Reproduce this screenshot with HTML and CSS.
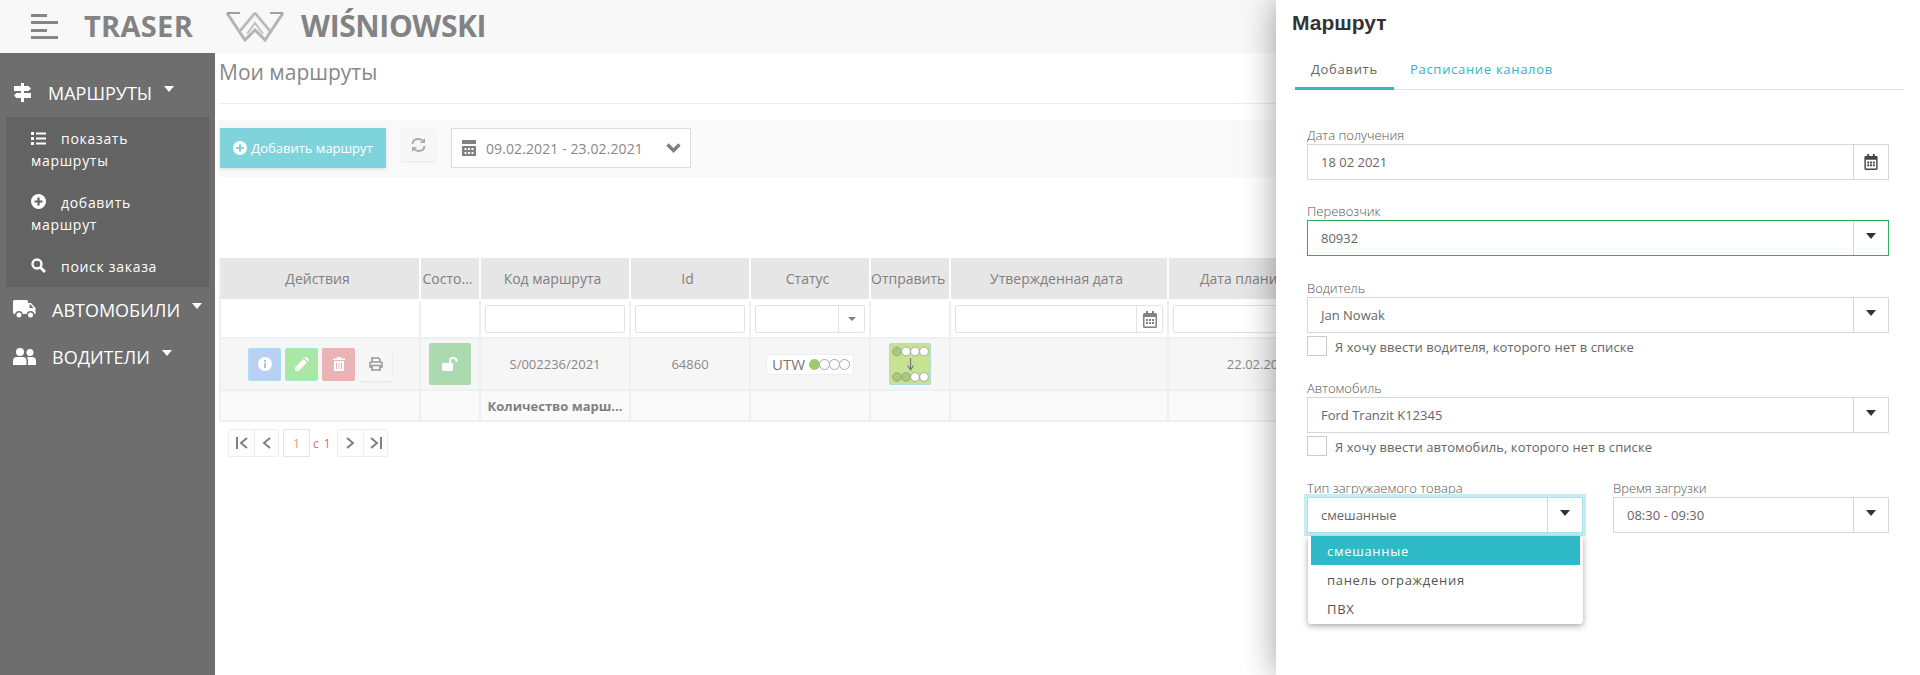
FILE: index.html
```html
<!DOCTYPE html>
<html lang="ru">
<head>
<meta charset="utf-8">
<title>Мои маршруты</title>
<link rel="stylesheet" href="styles.css">
</head>
<body>
<header class="topbar">
  <svg class="burger" width="27" height="26" viewBox="0 0 27 26"><rect width="16" height="3" fill="#858585"/><rect y="7" width="27" height="3" fill="#858585"/><rect y="15" width="16" height="3" fill="#858585"/><rect y="22" width="27" height="3" fill="#858585"/></svg>
  <span class="brand">TRASER</span>
  <svg class="w-logo" width="58" height="30" viewBox="0 0 58 30" fill="none"><path d="M1 1 19 28 29 18 39 28 57 1" stroke="#b4b4b4" stroke-width="3"/><path d="M1 1H14M57 1H44" stroke="#a0a0a0" stroke-width="2"/><path d="M14 19 29 1 44 19" stroke="#d0d0d0" stroke-width="3.400"/><path d="M14 19 29 1 44 19" stroke="#9c9c9c" stroke-width="1"/><path d="M21 22 29 11 37 22" stroke="#c2c2c2" stroke-width="2"/></svg>
  <span class="brand brand-second">WIŚNIOWSKI</span>
</header>
<div class="layout">
  <nav class="sidebar">
    <div class="nav-head">
      <svg class="nav-icon" width="19" height="19" viewBox="0 0 19 19" fill="#fff"><rect x="8" y="0" width="3" height="19"/><path d="M1 3H15.500L18 5.500 15.500 8H1Z"/><path d="M3.500 10H18V15H3.500L1 12.500Z"/></svg>
      <span>Маршруты</span><i class="nav-caret"></i>
    </div>
    <div class="submenu">
      <a class="sub-item"><svg class="sub-icon" width="15" height="13" viewBox="0 0 15 13" fill="#fff"><rect width="3" height="3"/><rect y="5" width="3" height="3"/><rect y="10" width="3" height="3"/><rect x="5" y="0.500" width="10" height="2"/><rect x="5" y="5.500" width="10" height="2"/><rect x="5" y="10.500" width="10" height="2"/></svg>показать маршруты</a>
      <a class="sub-item"><svg class="sub-icon" width="15" height="15" viewBox="0 0 15 15"><circle cx="7.500" cy="7.500" r="7.500" fill="#fff"/><path d="M7.500 3.500V11.500M3.500 7.500H11.500" stroke="#636363" stroke-width="2.200"/></svg>добавить маршрут</a>
      <a class="sub-item"><svg class="sub-icon" width="15" height="15" viewBox="0 0 15 15" fill="none" stroke="#fff"><circle cx="6" cy="6" r="4.500" stroke-width="2.400"/><path d="M9.500 9.500 14 14" stroke-width="2.800"/></svg>поиск заказа</a>
    </div>
    <div class="nav-head">
      <svg class="nav-icon" width="23" height="19" viewBox="0 0 23 19" fill="#fff"><path d="M1.500 0H13.500Q15 0 15 1.500V3H18L22.500 8V14H1.500Q0 14 0 12.500V1.500Q0 0 1.500 0Z"/><circle cx="6" cy="15" r="3.200" stroke="#6e6e6e" stroke-width="1.400"/><circle cx="17.500" cy="15" r="3.200" stroke="#6e6e6e" stroke-width="1.400"/><path d="M16.500 4.500V8H20.500L17.500 4.500Z" fill="#6e6e6e"/></svg>
      <span>Автомобили</span><i class="nav-caret"></i>
    </div>
    <div class="nav-head">
      <svg class="nav-icon" width="23" height="17" viewBox="0 0 23 17" fill="#fff"><circle cx="7" cy="4" r="4"/><circle cx="17" cy="4.500" r="3.500"/><path d="M0 17V13Q0 9 4 9H10Q13.500 9 13.500 13V17Z"/><path d="M15 17V12.500Q15 10.500 13.800 9.300Q15 9 17 9H19Q23 9 23 13V17Z"/></svg>
      <span>Водители</span><i class="nav-caret"></i>
    </div>
  </nav>
  <main class="content">
    <h1 class="page-title">Мои маршруты</h1>
    <div class="toolbar">
      <button class="add-btn"><svg width="14" height="14" viewBox="0 0 15 15"><circle cx="7.500" cy="7.500" r="7.500" fill="#fff"/><path d="M7.500 3.500V11.500M3.500 7.500H11.500" stroke="#7fd4dc" stroke-width="2.200"/></svg>Добавить маршрут</button>
      <button class="refresh-btn"><svg width="15" height="16" viewBox="0 0 15 16" fill="none" stroke="#aaa" stroke-width="2"><path d="M1.500 7Q2 2 7.500 2 10.500 2 12.500 4.500"/><path d="M13.500 9Q13 14 7.500 14 4.500 14 2.500 11.500"/><path d="M14 1V6H9Z" fill="#aaa" stroke="none"/><path d="M1 15V10H6Z" fill="#aaa" stroke="none"/></svg></button>
      <div class="range">
        <svg width="14" height="16" viewBox="0 0 14 16" fill="#808080"><rect width="14" height="4"/><path d="M0 6H14V16H0ZM2.500 8V10H4.500V8ZM6 8V10H8V8ZM9.500 8V10H11.500V8ZM2.500 12V14H4.500V12ZM6 12V14H8V12ZM9.500 12V14H11.500V12Z" fill-rule="evenodd"/></svg>
        <span class="range-text">09.02.2021 - 23.02.2021</span>
        <svg class="range-chevron" width="15" height="10" viewBox="0 0 15 10" fill="none" stroke="#808080" stroke-width="3.400"><path d="M1.500 1.500 7.500 7.500 13.500 1.500"/></svg>
      </div>
    </div>
    <table class="routes">
      <colgroup><col class="c1"><col class="c2"><col class="c3"><col class="c4"><col class="c5"><col class="c6"><col class="c7"><col class="c8"></colgroup>
      <thead>
        <tr><th>Действия</th><th>Состо...</th><th>Код маршрута</th><th>Id</th><th>Статус</th><th>Отправить</th><th>Утвержденная дата</th><th class="th-cut">Дата планир</th></tr>
      </thead>
      <tbody>
        <tr class="filter-row">
          <td></td><td></td>
          <td><input class="filter" type="text"></td>
          <td><input class="filter" type="text"></td>
          <td><div class="filter filter-combo"><span class="filter-fill"></span><span class="filter-addon"><i class="mini-caret"></i></span></div></td>
          <td></td>
          <td><div class="filter filter-combo"><span class="filter-fill"></span><span class="filter-addon filter-addon-cal"><svg width="14" height="17" viewBox="0 0 14 17" fill="#808080"><path d="M3 0H5V2H9V0H11V2H12.500Q14 2 14 3.500V15.500Q14 17 12.500 17H1.500Q0 17 0 15.500V3.500Q0 2 1.500 2H3ZM1.500 6V15.500H12.500V6ZM3 8H5V10H3ZM6 8H8V10H6ZM9 8H11V10H9ZM3 11H5V13H3ZM6 11H8V13H6ZM9 11H11V13H9Z" fill-rule="evenodd"/></svg></span></div></td>
          <td><input class="filter" type="text"></td>
        </tr>
        <tr class="data-row">
          <td>
            <div class="actions">
              <button class="act act-info"><svg width="14" height="14" viewBox="0 0 14 14"><circle cx="7" cy="7" r="7" fill="#fff"/><rect x="6" y="3" width="2" height="2" fill="#a9c4ee"/><rect x="6" y="6" width="2" height="5" fill="#a9c4ee"/></svg></button>
              <button class="act act-edit"><svg width="14" height="14" viewBox="0 0 14 14" fill="#fff"><path d="M0 14V10.500L8.500 2 12 5.500 3.500 14Z"/><path d="M9.500 1 10.500 0Q11 -.3 11.500 0L14 2.500Q14.300 3 14 3.500L13 4.500Z"/></svg></button>
              <button class="act act-del"><svg width="12" height="14" viewBox="0 0 12 14" fill="#fff"><path d="M0 1.500H3.500L4.200 0H7.800L8.500 1.500H12V3H0Z"/><path d="M1 4H11V14H1ZM3 6V12H4V6ZM5.500 6V12H6.500V6ZM8 6V12H9V6Z" fill-rule="evenodd"/></svg></button>
              <button class="act act-print"><svg width="14" height="14" viewBox="0 0 14 14" fill="none" stroke="#999" stroke-width="1.600"><path d="M3 5V1H9.500L11 2.500V5"/><path d="M3 10H1V6Q1 5 2 5H12Q13 5 13 6V10H11"/><path d="M3 8.500H11V13H3Z"/></svg></button>
            </div>
          </td>
          <td><button class="lock-btn"><svg width="16" height="14" viewBox="0 0 16 14" fill="#fff"><rect y="6" width="11" height="8" rx="1"/><path d="M8 6V3.500Q8 1 11 1 14.500 1 14.500 3.500V5" fill="none" stroke="#fff" stroke-width="2"/></svg></button></td>
          <td class="cell-text">S/002236/2021</td>
          <td class="cell-text">64860</td>
          <td><span class="status">UTW <span class="dots"><i class="dot dot-on"></i><i class="dot"></i><i class="dot"></i><i class="dot"></i></span></span></td>
          <td><button class="send"><svg width="38" height="36" viewBox="0 0 38 36" stroke="#999" stroke-width=".8"><circle cx="6" cy="5.500" r="4.400" fill="#a4cc78"/><circle cx="15" cy="5.500" r="4.400" fill="#fff"/><circle cx="24" cy="5.500" r="4.400" fill="#fff"/><circle cx="33" cy="5.500" r="4.400" fill="#fff"/><path d="M19.500 12V23M16.500 19.500 19.500 24 22.500 19.500" fill="none" stroke="#777" stroke-width="1.200"/><circle cx="6" cy="31" r="4.400" fill="#a4cc78"/><circle cx="15" cy="31" r="4.400" fill="#a4cc78"/><circle cx="24" cy="31" r="4.400" fill="#fff"/><circle cx="33" cy="31" r="4.400" fill="#fff"/></svg></button></td>
          <td></td>
          <td class="cell-text">22.02.2021</td>
        </tr>
        <tr class="total-row">
          <td></td><td></td><td class="total-label">Количество марш...</td><td></td><td></td><td></td><td></td><td></td>
        </tr>
      </tbody>
    </table>
    <div class="pager">
      <div class="pager-group">
        <button class="pg"><svg width="12" height="12" viewBox="0 0 12 12" fill="none" stroke="#808080" stroke-width="2"><path d="M1 0V12M11 1 5 6 11 11"/></svg></button>
        <button class="pg"><svg width="9" height="12" viewBox="0 0 9 12" fill="none" stroke="#808080" stroke-width="2"><path d="M8 1 2 6 8 11"/></svg></button>
      </div>
      <span class="pg-current">1</span>
      <span class="pg-of">с 1</span>
      <div class="pager-group">
        <button class="pg"><svg width="9" height="12" viewBox="0 0 9 12" fill="none" stroke="#808080" stroke-width="2"><path d="M1 1 7 6 1 11"/></svg></button>
        <button class="pg"><svg width="12" height="12" viewBox="0 0 12 12" fill="none" stroke="#808080" stroke-width="2"><path d="M11 0V12M1 1 7 6 1 11"/></svg></button>
      </div>
    </div>
  </main>
</div>
<aside class="panel">
  <h2 class="panel-title">Маршрут</h2>
  <div class="tabs">
    <span class="tab tab-active">Добавить</span>
    <span class="tab">Расписание каналов</span>
  </div>
  <form class="form">
    <div class="field field-first">
      <label class="label">Дата получения</label>
      <div class="combo"><span class="combo-value">18 02 2021</span><span class="addon"><svg width="14" height="16" viewBox="0 0 14 17" fill="#444"><path d="M3 0H5V2H9V0H11V2H12.500Q14 2 14 3.500V15.500Q14 17 12.500 17H1.500Q0 17 0 15.500V3.500Q0 2 1.500 2H3ZM1.500 6V15.500H12.500V6ZM3 8H5V10H3ZM6 8H8V10H6ZM9 8H11V10H9ZM3 11H5V13H3ZM6 11H8V13H6ZM9 11H11V13H9Z" fill-rule="evenodd"/></svg></span></div>
    </div>
    <div class="field">
      <label class="label">Перевозчик</label>
      <div class="combo combo-valid"><span class="combo-value">80932</span><span class="addon"><i class="caret"></i></span></div>
    </div>
    <div class="field">
      <label class="label">Водитель</label>
      <div class="combo"><span class="combo-value">Jan Nowak</span><span class="addon"><i class="caret"></i></span></div>
      <div class="check"><span class="box"></span><span class="check-text">Я хочу ввести водителя, которого нет в списке</span></div>
    </div>
    <div class="field">
      <label class="label">Автомобиль</label>
      <div class="combo"><span class="combo-value">Ford Tranzit K12345</span><span class="addon"><i class="caret"></i></span></div>
      <div class="check"><span class="box"></span><span class="check-text">Я хочу ввести автомобиль, которого нет в списке</span></div>
    </div>
    <div class="field-row">
      <div class="field">
        <label class="label">Тип загружаемого товара</label>
        <div class="combo combo-focus"><span class="combo-value">смешанные</span><span class="addon"><i class="caret"></i></span>
          <ul class="dropdown">
            <li class="opt opt-active">смешанные</li>
            <li class="opt">панель ограждения</li>
            <li class="opt">ПВХ</li>
          </ul>
        </div>
      </div>
      <div class="field">
        <label class="label">Время загрузки</label>
        <div class="combo"><span class="combo-value">08:30 - 09:30</span><span class="addon"><i class="caret"></i></span></div>
      </div>
    </div>
  </form>
</aside>
</body>
</html>
```
FILE: styles.css
```css
* { box-sizing: border-box; }
html, body { margin: 0; height: 675px; overflow: hidden; }
body { font-family: "Open Sans", "Noto Sans", sans-serif; color: #888; background: #fff; font-size: 13px; }
button { font-family: inherit; padding: 0; border: 0; display: inline-flex; align-items: center; justify-content: center; }

.topbar { height: 53px; background: #f8f8f8; display: flex; align-items: center; padding-left: 31px; }
.burger { margin-right: 26px; }
.brand { font-size: 29px; font-weight: 700; color: #838383; letter-spacing: .3px; margin-top: -2px; }
.w-logo { margin-left: 33px; margin-right: 17px; }
.brand-second { font-size: 30px; letter-spacing: -.4px; }

.layout { display: flex; height: 622px; }
.sidebar { width: 215px; flex: none; background: #6e6e6e; padding-top: 17px; color: #fff; }
.nav-head { height: 47px; display: flex; align-items: center; padding: 0 0 2px 13px; font-size: 18px; text-transform: uppercase; }
.nav-icon { margin-right: 16px; flex: none; }
.nav-caret { width: 0; height: 0; border: 5.500px solid transparent; border-top: 6px solid #fff; border-bottom: 0; margin: 0 0 7px 12px; }
.submenu { margin: 0 6px; background: #636363; height: 170px; padding: 11px 30px 0 25px; display: flex; flex-direction: column; gap: 20px; font-size: 14px; line-height: 22px; letter-spacing: .7px; }
.sub-item { display: block; }
.sub-icon { margin-right: 15px; vertical-align: -1px; }

.content { flex: 1; min-width: 0; padding-left: 4px; overflow: hidden; }
.page-title { margin: 0; height: 51px; padding: 5px 0 0; font-size: 21px; line-height: 28px; font-weight: 400; color: #888; border-bottom: 1px solid #eee; }
.toolbar { margin-top: 16px; height: 57px; background: #f9f9f9; padding: 8px 0 0 1px; display: flex; align-items: flex-start; }
.add-btn { width: 166px; height: 40px; background: #7fd4dc; color: #fff; font-size: 13px; gap: 4px; box-shadow: 0 1px 3px rgba(0,0,0,.12); }
.refresh-btn { width: 33px; height: 33px; background: #f7f7f7; margin-left: 16px; box-shadow: 0 1px 2px rgba(0,0,0,.08); }
.range { width: 240px; height: 40px; margin-left: 16px; background: #fff; border: 1px solid #ddd; display: flex; align-items: center; padding-left: 10px; }
.range-text { margin-left: 10px; font-size: 14px; letter-spacing: .1px; color: #888; }
.range-chevron { margin-left: auto; margin-right: 9px; }

.routes { margin-top: 81px; border-collapse: separate; border-spacing: 0; table-layout: fixed; width: 1134px; border-left: 2px solid #edf0f3; }
.c1 { width: 200px; } .c2 { width: 60px; } .c3 { width: 150px; } .c4 { width: 120px; }
.c5 { width: 120px; } .c6 { width: 80px; } .c7 { width: 218px; } .c8 { width: 184px; }
.routes th { height: 43px; background: #e6e6e6; border-right: 2px solid #fff; border-bottom: 2px solid #fff; font-weight: 400; font-size: 14px; color: #808080; padding: 0 5px 0 0; white-space: nowrap; overflow: hidden; }
.routes .th-cut { text-align: left; padding-left: 31px; }
.routes td { border-right: 2px solid #edf0f3; border-bottom: 2px solid #edf0f3; padding: 0 4px; text-align: center; }
.filter-row td { height: 38px; background: #fff; }
.data-row td { height: 52px; background: #f6f6f6; }
.total-row td { height: 31px; background: #fafafa; }
.cell-text { font-size: 13px; color: #888; }
.total-label { font-weight: 700; font-size: 13px; color: #808080; white-space: nowrap; overflow: hidden; }

.filter { display: block; width: 100%; height: 28px; border: 1px solid #e3e3e3; border-radius: 2px; background: #fff; padding: 0; outline: 0; }
.filter-combo { display: flex; }
.filter-fill { flex: 1; }
.filter-addon { width: 26px; border-left: 1px solid #e3e3e3; display: flex; align-items: center; justify-content: center; }
.mini-caret { width: 0; height: 0; border: 4px solid transparent; border-top: 4px solid #808080; border-bottom: 0; }

.actions { display: flex; justify-content: center; gap: 4px; }
.act { width: 33px; height: 33px; border-radius: 2px; border: 1px solid transparent; }
.act-info { background: #bad0f3; border-color: #a9e0f5; }
.act-edit { background: #a8e8a4; border-color: #a8e6cc; }
.act-del { background: #e8b4b6; border-color: #eeb0b4; }
.act-print { background: #f7f7f7; box-shadow: 0 1px 2px rgba(0,0,0,.08); }
.lock-btn { width: 42px; height: 42px; background: #abd9b0; border-radius: 2px; vertical-align: middle; }
.status { display: inline-flex; align-items: center; height: 21px; padding: 0 4px 0 5px; background: #fff; border: 1px solid #eee; border-radius: 3px; font-size: 15px; color: #777; vertical-align: middle; white-space: pre; }
.dots { display: inline-flex; }
.dot { width: 11px; height: 11px; border-radius: 50%; border: 1px solid #aaa; background: #fff; margin-right: -1px; }
.dot-on { background: #9ccc6f; border-color: #9ccc6f; }
.send { width: 42px; height: 42px; background: #c8e294; border: 1px solid #a6e0d8; border-radius: 2px; vertical-align: middle; }

.pager { display: flex; align-items: center; margin: 7px 0 0 9px; height: 28px; }
.pager-group { display: flex; border: 1px solid #eee; border-radius: 2px; height: 28px; }
.pg { width: 25px; background: #fff; }
.pg + .pg { width: 24px; border-left: 1px solid #eee; }
.pg-current { width: 27px; height: 28px; margin-left: 4px; border: 1px solid #e5e5e5; font-size: 12px; color: #c9a27a; display: flex; align-items: center; justify-content: center; }
.pg-of { width: 27px; padding-left: 3px; font-size: 12px; letter-spacing: 1px; color: #f0606a; }

.panel { position: absolute; left: 1276px; top: 0; width: 644px; height: 675px; background: #fff; padding: 11px 16px 0; box-shadow: 0 0 32px rgba(0,0,0,.38); color: #666; }
.panel-title { margin: 0; font-family: "Liberation Sans", sans-serif; font-size: 21px; line-height: 24px; font-weight: 700; color: #333; }
.tabs { margin-top: 11px; height: 44px; border-bottom: 1px solid #e4e4e4; padding-left: 3px; display: flex; }
.tab { height: 44px; padding-top: 13px; font-size: 13px; line-height: 20px; letter-spacing: .7px; color: #35b5c3; white-space: nowrap; }
.tab-active { width: 99px; margin-right: 16px; padding-left: 16px; color: #666; border-bottom: 3px solid #2fb8c6; }

.form { margin: 36px 0 0 15px; width: 582px; }
.field { margin-bottom: 23px; }
.field-first { margin-bottom: 22px; }
.label { display: block; height: 17px; margin-bottom: 1px; padding-top: 1px; font-size: 13px; line-height: 16px; font-weight: 300; color: #555; }
.combo { position: relative; display: flex; align-items: center; height: 36px; border: 1px solid #d5d7dc; background: #fff; }
.combo-value { flex: 1; padding-left: 13px; font-size: 13px; color: #666; }
.addon { width: 35px; height: 100%; border-left: 1px solid #d5d7dc; display: flex; align-items: center; justify-content: center; }
.caret { width: 0; height: 0; margin-bottom: 5px; border: 5px solid transparent; border-top: 6px solid #333; border-bottom: 0; }
.combo-valid { border-color: #2fae5a; }
.combo-focus { border-color: #a7e3e9; box-shadow: 0 0 0 3px #c5eef2; }
.check { display: flex; align-items: center; gap: 8px; height: 20px; margin-top: 3px; font-size: 13px; letter-spacing: .07px; color: #666; }
.check-text { padding-top: 2px; }
.box { width: 20px; height: 20px; border: 1px solid #c8cad0; background: #fff; }
.field-row { display: grid; grid-template-columns: 276px 276px; column-gap: 30px; }
.dropdown { position: absolute; left: 0; top: 38px; width: 275px; height: 88px; margin: 0; padding: 0 3px; list-style: none; background: #fff; border-radius: 0 0 3px 3px; box-shadow: 0 2px 6px rgba(0,0,0,.35); z-index: 2; }
.opt { height: 29px; padding-left: 16px; font-size: 13px; line-height: 30px; letter-spacing: .7px; color: #555; }
.opt-active { background: #2eb9c7; color: #fff; }
```
